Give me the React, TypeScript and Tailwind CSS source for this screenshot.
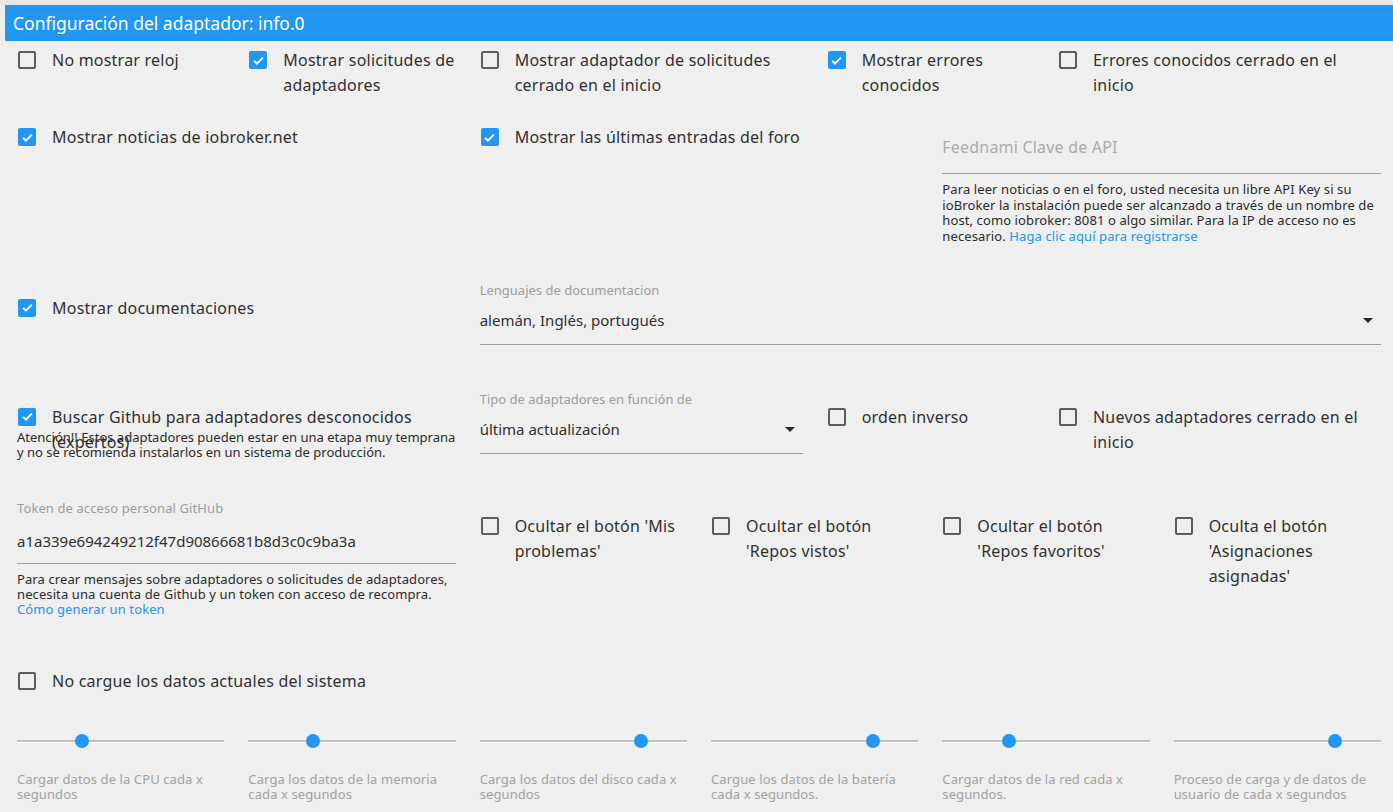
import React from "react";

const FONT = { fontFamily: '"Noto Sans", "Open Sans", sans-serif' };

function Box({ checked }: { checked?: boolean }) {
  if (checked) {
    return (
      <span className="mt-[3px] flex h-[18px] w-[18px] shrink-0 items-center justify-center rounded-[2px] bg-[#2196f3]">
        <svg viewBox="0 0 24 24" className="h-[15px] w-[15px]" fill="none" stroke="#fff" strokeWidth="3">
          <path d="M5 12.5l4.5 4.5L19 7.5" />
        </svg>
      </span>
    );
  }
  return <span className="mt-[3px] h-[18px] w-[18px] shrink-0 rounded-[2px] border-2 border-[#5c5c5c]" />;
}

function Check({ label, checked, className = "" }: { label: string; checked?: boolean; className?: string }) {
  return (
    <label className={`flex items-start pl-[13px] pr-3 ${className}`}>
      <Box checked={checked} />
      <span className="ml-4 text-[16px] leading-[25px] tracking-[0.22px] text-[#303030]">{label}</span>
    </label>
  );
}

function Select({ label, value }: { label: string; value: string }) {
  return (
    <div className="px-3">
      <div className="text-[13px] leading-[16px] text-[#9e9e9e]">{label}</div>
      <div className="mt-[10px] flex items-center justify-between border-b border-[#9e9e9e] pb-[11px]">
        <span className="text-[15px] leading-[25px] text-[#303030]">{value}</span>
        <svg viewBox="0 0 10 5" className="mr-2 h-[5px] w-[10px]">
          <path d="M0 0h10L5 5z" fill="#2b2b2b" />
        </svg>
      </div>
    </div>
  );
}

function Slider({ pos, label }: { pos: number; label: string }) {
  return (
    <div className="px-3">
      <div className="relative h-[28px]">
        <div className="absolute left-0 right-0 top-[13px] h-[3px] border-b border-white bg-[#bfbfbf]" />
        <div
          className="absolute top-[7px] h-[14px] w-[14px] -translate-x-1/2 rounded-full bg-[#2196f3]"
          style={{ left: `${pos}%` }}
        />
      </div>
      <div className="mt-[17px] text-[13px] leading-[15px] tracking-[0.1px] text-[#a3a3a3]">{label}</div>
    </div>
  );
}

export default function App() {
  return (
    <div className="min-h-[812px] w-[1393px] overflow-hidden bg-[#efefef]" style={FONT}>
      <div className="h-[5px] bg-[#e6e6e6]" />
      <div className="ml-[5px] flex h-[36px] items-center bg-[#2196f3] pl-2 text-[17.5px] text-white">
        Configuración del adaptador: info.0
      </div>
      <div className="ml-[5px]">
        {/* row 1 */}
        <div className="mt-[7px] grid h-[77px] grid-cols-12 items-start">
          <Check className="col-span-2" label="No mostrar reloj" />
          <Check className="col-span-2" label="Mostrar solicitudes de adaptadores" checked />
          <Check className="col-span-3" label="Mostrar adaptador de solicitudes cerrado en el inicio" />
          <Check className="col-span-2" label="Mostrar errores conocidos" checked />
          <Check className="col-span-3 pr-[30px]" label="Errores conocidos cerrado en el inicio" />
        </div>

        {/* row 2 */}
        <div className="grid h-[157px] grid-cols-12 items-start">
          <Check className="col-span-4" label="Mostrar noticias de iobroker.net" checked />
          <Check className="col-span-4" label="Mostrar las últimas entradas del foro" checked />
          <div className="col-span-4 px-3">
            <div className="mt-[10px] border-b border-[#9e9e9e] pb-[13px] text-[16px] leading-[25px] tracking-[0.2px] text-[#ababab]">
              Feednami Clave de API
            </div>
            <div className="mt-[8px] text-[13px] leading-[15.6px] tracking-[0.1px] text-[#2b2b2b]">
              Para leer noticias o en el foro, usted necesita un libre API Key si su ioBroker la instalación puede ser
              alcanzado a través de un nombre de host, como iobroker: 8081 o algo similar. Para la IP de acceso no es
              necesario. <span className="text-[#2196f3]">Haga clic aquí para registrarse</span>
            </div>
          </div>
        </div>

        {/* row 3 */}
        <div className="grid h-[109px] grid-cols-12 items-start">
          <Check className="col-span-4 mt-[13.5px]" label="Mostrar documentaciones" checked />
          <div className="col-span-8">
            <Select label="Lenguajes de documentacion" value="alemán, Inglés, portugués" />
          </div>
        </div>

        {/* row 4 */}
        <div className="grid h-[109px] grid-cols-12 items-start">
          <div className="col-span-4 mt-[13.5px]">
            <Check className="h-[25px]" label="Buscar Github para adaptadores desconocidos (expertos)" checked />
            <div className="relative pl-3 pr-1 text-[13px] leading-[15.5px] text-[#2b2b2b]">
              Atención!! Estos adaptadores pueden estar en una etapa muy temprana y no se recomienda instalarlos en un
              sistema de producción.
            </div>
          </div>
          <div className="col-span-3">
            <Select label="Tipo de adaptadores en función de" value="última actualización" />
          </div>
          <Check className="col-span-2 mt-[13.5px]" label="orden inverso" />
          <Check className="col-span-3 mt-[13.5px]" label="Nuevos adaptadores cerrado en el inicio" />
        </div>

        {/* row 5 */}
        <div className="grid h-[168.5px] grid-cols-12 items-start">
          <div className="col-span-4 px-3">
            <div className="text-[13px] leading-[16px] tracking-[0.1px] text-[#9e9e9e]">Token de acceso personal GitHub</div>
            <div className="mt-[12.5px] border-b border-[#9e9e9e] pb-[9px] text-[15px] leading-[25px] text-[#303030]">
              a1a339e694249212f47d90866681b8d3c0c9ba3a
            </div>
            <div className="mt-[8px] text-[13px] leading-[15px] tracking-[0.1px] text-[#2b2b2b]">
              Para crear mensajes sobre adaptadores o solicitudes de adaptadores, necesita una cuenta de Github y un
              token con acceso de recompra.
              <br />
              <span className="text-[#2196f3]">Cómo generar un token</span>
            </div>
          </div>
          <Check className="col-span-2 mt-[13.5px]" label="Ocultar el botón 'Mis problemas'" />
          <Check className="col-span-2 mt-[13.5px]" label="Ocultar el botón 'Repos vistos'" />
          <Check className="col-span-2 mt-[13.5px]" label="Ocultar el botón 'Repos favoritos'" />
          <Check className="col-span-2 mt-[13.5px]" label="Oculta el botón 'Asignaciones asignadas'" />
        </div>

        {/* row 6 */}
        <div className="grid h-[58.5px] grid-cols-12 items-start">
          <Check className="col-span-4" label="No cargue los datos actuales del sistema" />
        </div>

        {/* row 7 */}
        <div className="grid grid-cols-12 items-start">
          <div className="col-span-2">
            <Slider pos={31.5} label="Cargar datos de la CPU cada x segundos" />
          </div>
          <div className="col-span-2">
            <Slider pos={31} label="Carga los datos de la memoria cada x segundos" />
          </div>
          <div className="col-span-2">
            <Slider pos={78} label="Carga los datos del disco cada x segundos" />
          </div>
          <div className="col-span-2">
            <Slider pos={78} label="Cargue los datos de la batería cada x segundos." />
          </div>
          <div className="col-span-2">
            <Slider pos={32} label="Cargar datos de la red cada x segundos." />
          </div>
          <div className="col-span-2">
            <Slider pos={78} label="Proceso de carga y de datos de usuario de cada x segundos" />
          </div>
        </div>
      </div>
    </div>
  );
}
